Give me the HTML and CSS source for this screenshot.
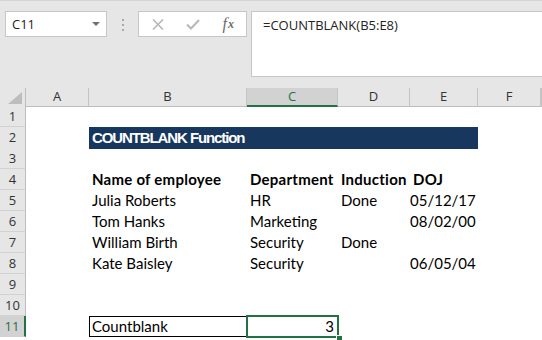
FILE: index.html
```html
<!DOCTYPE html>
<html>
<head>
<meta charset="utf-8">
<link rel="stylesheet" href="styles.css">
</head>
<body>
<div class="toolbar">
  <div class="namebox">
    <span>C11</span>
    <svg class="arrow" width="8" height="4" viewBox="0 0 8 4"><path d="M0 0H8L4 4Z" fill="#707070"/></svg>
  </div>
  <div class="grip"><i></i><i></i><i></i></div>
  <div class="fbtns">
    <span class="fb"><svg width="12" height="11" viewBox="0 0 12 11"><path d="M1 0.5L11 10.5M11 0.5L1 10.5" stroke="#b8b8b8" stroke-width="1.6" fill="none"/></svg></span>
    <span class="fb"><svg width="14" height="11" viewBox="0 0 14 11"><path d="M1 5.5L5 9.5L13 1" stroke="#b8b8b8" stroke-width="2" fill="none"/></svg></span>
    <span class="fb fx"><i class="f">f</i><i class="x">x</i></span>
  </div>
  <div class="formula">=COUNTBLANK(B5:E8)</div>
</div>
<div class="sheet">
  <div class="row hdr">
    <div class="corner"><svg width="14" height="12" viewBox="0 0 14 12"><path d="M14 0V12H0Z" fill="#bdbdbd"/></svg></div>
    <div class="hc">A</div><div class="hc">B</div><div class="hc sel">C</div><div class="hc">D</div><div class="hc">E</div><div class="hc">F</div><div class="hc"></div>
  </div>
  <div class="row"><div class="rh">1</div></div>
  <div class="row"><div class="rh">2</div><div class="c"></div><div class="c title">COUNTBLANK Function</div></div>
  <div class="row"><div class="rh">3</div></div>
  <div class="row"><div class="rh">4</div><div class="c"></div><div class="c b">Name of employee</div><div class="c b">Department</div><div class="c b">Induction</div><div class="c b">DOJ</div></div>
  <div class="row"><div class="rh">5</div><div class="c"></div><div class="c">Julia Roberts</div><div class="c">HR</div><div class="c">Done</div><div class="c r">05/12/17</div></div>
  <div class="row"><div class="rh">6</div><div class="c"></div><div class="c">Tom Hanks</div><div class="c">Marketing</div><div class="c"></div><div class="c r">08/02/00</div></div>
  <div class="row"><div class="rh">7</div><div class="c"></div><div class="c">William Birth</div><div class="c">Security</div><div class="c">Done</div><div class="c r"></div></div>
  <div class="row"><div class="rh">8</div><div class="c"></div><div class="c">Kate Baisley</div><div class="c">Security</div><div class="c"></div><div class="c r">06/05/04</div></div>
  <div class="row"><div class="rh">9</div></div>
  <div class="row"><div class="rh">10</div></div>
  <div class="row"><div class="rh sel">11</div><div class="c"></div><div class="c boxed">Countblank</div><div class="c r active">3<span class="handle"></span></div></div>
</div>
</body>
</html>
```

FILE: styles.css
```css
* { box-sizing: border-box; }
html, body { margin: 0; padding: 0; }
body {
  width: 542px;
  height: 340px;
  overflow: hidden;
  background: #ffffff;
  font-family: "Open Sans", "Noto Sans", sans-serif;
  color: #222;
}
.toolbar {
  height: 88px;
  background: #e6e6e6;
  border-top: 1px solid #d4d4d4;
  display: flex;
  align-items: flex-start;
  padding: 10px 0 0 5px;
}
.namebox {
  width: 102px;
  height: 26px;
  background: #fff;
  border: 1px solid #c6c6c6;
  display: flex;
  align-items: center;
  justify-content: space-between;
  padding: 0 6px 0 6px;
  font-size: 13px;
  color: #222;
}
.arrow { display: block; }
.grip {
  width: 31px;
  display: flex;
  flex-direction: column;
  align-items: center;
  gap: 3px;
  padding-top: 8px;
}
.grip i {
  display: block;
  width: 2px;
  height: 2px;
  background: #a8a8a8;
}
.fbtns {
  width: 109px;
  height: 26px;
  background: #fff;
  border: 1px solid #c6c6c6;
  display: flex;
  align-items: center;
  padding-left: 1px;
}
.fb {
  width: 36px;
  display: flex;
  justify-content: center;
  align-items: center;
}
.fx {
  font-family: "Liberation Serif", serif;
  color: #6a6a6a;
  font-size: 16px;
  line-height: 16px;
}
.fx .x { font-size: 12px; font-weight: bold; margin-left: 1px; }
.formula {
  margin-left: 4px;
  flex: 1;
  height: 66px;
  background: #fff;
  border: 1px solid #c6c6c6;
  border-right: none;
  padding: 3px 0 0 11px;
  font-size: 13px;
  line-height: 20px;
  color: #222;
}
.sheet { display: flex; flex-direction: column; }
.row {
  display: grid;
  grid-template-columns: 26px 63px 158px 91px 72px 68px 63px 1fr;
  height: 21px;
}
.row.hdr { height: 18px; }
.corner {
  background: #e6e6e6;
  border-right: 1px solid #bdbdbd;
  border-bottom: 1px solid #bdbdbd;
  display: flex;
  align-items: flex-end;
  justify-content: flex-end;
  padding: 0 3px 2px 0;
}
.corner svg { display: block; }
.hc {
  background: #e6e6e6;
  border-right: 1px solid #c4c4c4;
  border-bottom: 1px solid #bdbdbd;
  text-align: center;
  font-size: 13px;
  line-height: 17px;
  color: #333;
}
.hc.sel {
  background: #d2d2d2;
  border-bottom: 2px solid #217346;
  color: #217346;
}
.rh {
  background: #e6e6e6;
  border-right: 1px solid #bdbdbd;
  border-bottom: 1px solid #d2d2d2;
  text-align: center;
  font-size: 13px;
  line-height: 20px;
  color: #333;
}
.rh.sel {
  background: #d2d2d2;
  border-right: 2px solid #217346;
  color: #217346;
}
.c {
  font-family: Lato, "Liberation Sans", sans-serif;
  font-size: 15px;
  line-height: 21px;
  padding-left: 3px;
  white-space: nowrap;
  color: #000;
}
.c.b { font-weight: bold; letter-spacing: 0.25px; }
.c.r { text-align: right; padding-right: 3px; padding-left: 0; }
.c.title {
  grid-column: span 4;
  background: #17375e;
  color: #fff;
  font-family: "Liberation Sans", Arial, sans-serif;
  font-weight: bold;
  font-size: 15px;
  letter-spacing: -1.1px;
  line-height: 22px;
}
.c.boxed {
  border: 1px solid #000;
  line-height: 19px;
  padding-left: 2px;
}
.c.active {
  position: relative;
  outline: 2px solid #217346;
  outline-offset: -1px;
  padding-right: 4px;
}
.handle {
  position: absolute;
  right: -4px;
  bottom: -4px;
  width: 6px;
  height: 6px;
  background: #217346;
  border: 1px solid #fff;
  border-right: none;
  border-bottom: none;
}
```
